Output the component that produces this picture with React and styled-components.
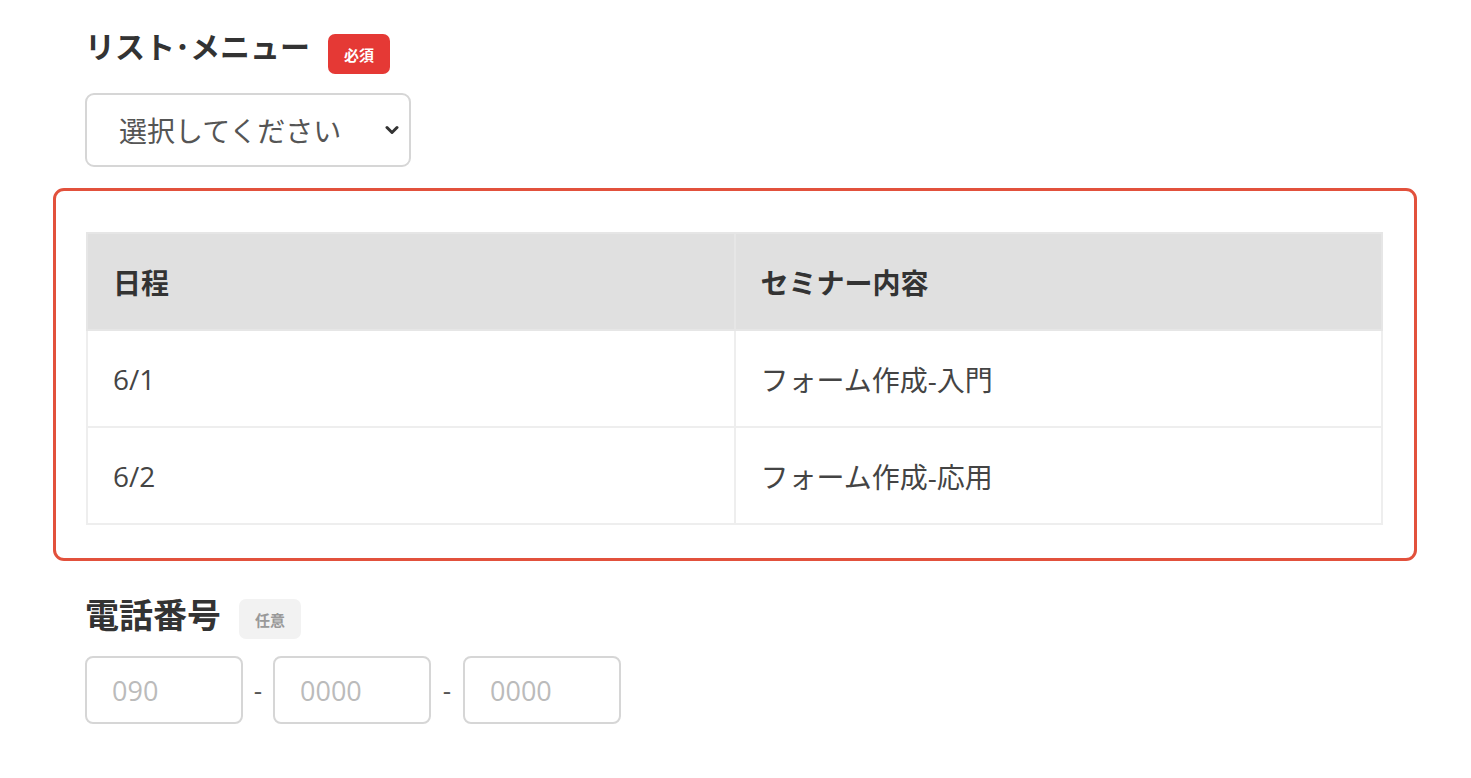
import React from 'react';
import styled, { createGlobalStyle } from 'styled-components';

const GlobalStyle = createGlobalStyle`
  html, body {
    margin: 0;
    padding: 0;
    background: #fff;
  }
  body {
    font-family: "Open Sans", "Noto Sans CJK JP", sans-serif;
    color: #333;
  }
`

const Page = styled.div`
  padding: 30px 54px 40px 53px;
  display: flex;
  flex-direction: column;
`

const Field = styled.div`
  padding-left: 32px;
  display: flex;
  flex-direction: column;
  margin-top: ${p => p.top || 0}px;
`

const LabelRow = styled.div`
  display: flex;
  align-items: flex-start;
  gap: ${p => p.gap || 18}px;
`

const Label = styled.div`
  font-family: "Noto Sans CJK JP", sans-serif;
  font-size: ${p => p.size || 30}px;
  font-weight: 700;
  color: #333;
  line-height: 1;
`

const Badge = styled.span`
  display: inline-flex;
  align-items: center;
  justify-content: center;
  margin-top: ${p => p.top || 0}px;
  width: 62px;
  height: 40px;
  border-radius: 7px;
  font-family: "Noto Sans CJK JP", sans-serif;
  font-size: 15px;
  font-weight: 700;
  background: ${p => p.required ? '#e53935' : '#f2f2f2'};
  color: ${p => p.required ? '#fff' : '#999'};
`

const SelectBox = styled.div`
  margin-top: 19px;
  width: 326px;
  height: 74px;
  box-sizing: border-box;
  border: 2px solid #d6d6d6;
  border-radius: 9px;
  display: flex;
  align-items: center;
  justify-content: space-between;
  padding: 0 10px 0 32px;
  font-family: "Noto Sans CJK JP", sans-serif;
  font-size: 28px;
  color: #555;
`

const Chevron = () =>
  <svg width="14" height="10" viewBox="0 0 14 10">
    <path d="M2 2.5 L7 7.5 L12 2.5" fill="none" stroke="#333" strokeWidth="3" strokeLinecap="round" strokeLinejoin="round"/>
  </svg>

const Highlight = styled.div`
  margin-top: 21px;
  border: 3px solid #e2513c;
  border-radius: 11px;
  padding: 41px 31px 33px 30px;
`

const Table = styled.table`
  width: 100%;
  border-collapse: collapse;
  font-size: 28px;
`

const Th = styled.th`
  background: #e0e0e0;
  text-align: left;
  font-family: "Noto Sans CJK JP", sans-serif;
  font-weight: 700;
  height: 95px;
  padding: 0 25px;
  border: 2px solid #e6e6e6;
  color: #333;
  width: 50%;
`

const Td = styled.td`
  height: 95px;
  padding: 0 25px;
  border: 2px solid #eeeeee;
  color: #444;
`

const PhoneRow = styled.div`
  margin-top: 17px;
  display: flex;
  align-items: center;
`

const PhoneInput = styled.div`
  width: 158px;
  height: 68px;
  box-sizing: border-box;
  border: 2px solid #d6d6d6;
  border-radius: 8px;
  padding-left: 25px;
  display: flex;
  align-items: center;
  font-size: 27px;
  color: #bbb;
`

const Dash = styled.span`
  width: ${p => p.w}px;
  text-align: center;
  font-size: 26px;
  color: #555;
`

const seminars = [
  { date: '6/1', title: 'フォーム作成-入門' },
  { date: '6/2', title: 'フォーム作成-応用' },
]

export default function App() {
  return (
    <Page>
      <GlobalStyle />
      <Field>
        <LabelRow>
          <Label>リスト･メニュー</Label>
          <Badge required top={4}>必須</Badge>
        </LabelRow>
        <SelectBox>
          選択してください
          <Chevron />
        </SelectBox>
      </Field>
      <Highlight>
        <Table>
          <thead>
            <tr>
              <Th>日程</Th>
              <Th>セミナー内容</Th>
            </tr>
          </thead>
          <tbody>
            {seminars.map((s, i) => <tr key={i}>
              <Td>{s.date}</Td>
              <Td>{s.title}</Td>
            </tr>)}
          </tbody>
        </Table>
      </Highlight>
      <Field top={36}>
        <LabelRow gap={18}>
          <Label size={34}>電話番号</Label>
          <Badge top={2}>任意</Badge>
        </LabelRow>
        <PhoneRow>
          <PhoneInput>090</PhoneInput>
          <Dash w={30}>-</Dash>
          <PhoneInput>0000</PhoneInput>
          <Dash w={32}>-</Dash>
          <PhoneInput>0000</PhoneInput>
        </PhoneRow>
      </Field>
    </Page>
  )
}
